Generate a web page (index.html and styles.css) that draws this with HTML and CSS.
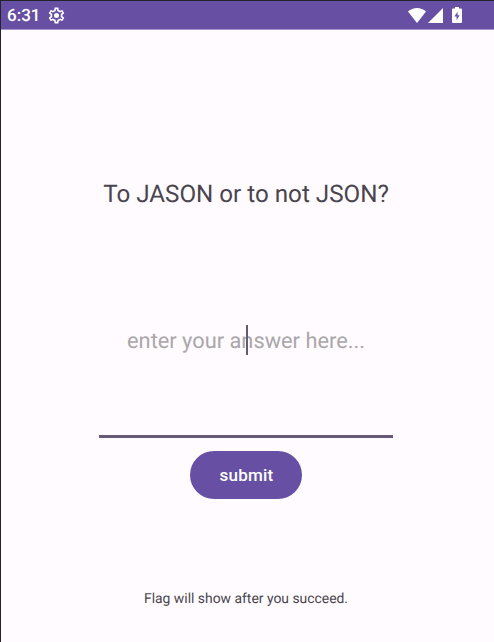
FILE: index.html
```html
<!DOCTYPE html>
<html lang="en">
<head>
<meta charset="utf-8">
<title>Question</title>
<link rel="stylesheet" href="styles.css">
</head>
<body>
<div class="device">
  <header class="status-bar">
    <span class="clock">6:31</span>
    <svg class="gear" viewBox="0 0 24 24"><path d="M19.43 12.98c.04-.32.07-.64.07-.98s-.03-.66-.07-.98l2.11-1.65c.19-.15.24-.42.12-.64l-2-3.46c-.12-.22-.39-.3-.61-.22l-2.49 1c-.52-.4-1.08-.73-1.69-.98l-.38-2.65C14.46 2.18 14.25 2 14 2h-4c-.25 0-.46.18-.49.42l-.38 2.65c-.61.25-1.17.59-1.69.98l-2.49-1c-.23-.09-.49 0-.61.22l-2 3.46c-.13.22-.07.49.12.64l2.11 1.65c-.04.32-.07.65-.07.98s.03.66.07.98l-2.11 1.65c-.19.15-.24.42-.12.64l2 3.46c.12.22.39.3.61.22l2.49-1c.52.4 1.08.73 1.69.98l.38 2.65c.03.24.24.42.49.42h4c.25 0 .46-.18.49-.42l.38-2.65c.61-.25 1.17-.59 1.69-.98l2.49 1c.23.09.49 0 .61-.22l2-3.46c.12-.22.07-.49-.12-.64l-2.11-1.65zm-2-1.7c.05.3.07.5.07.72s-.02.43-.07.73l-.14 1.13.9.7 1.1.84-.7 1.2-1.27-.5-1.04-.42-.9.68c-.43.32-.84.56-1.25.73l-1.06.43-.16 1.13-.2 1.35h-1.42l-.19-1.35-.16-1.13-1.06-.43c-.43-.18-.83-.41-1.23-.71l-.91-.7-1.06.43-1.27.51-.7-1.2 1.08-.84.89-.7-.14-1.13c-.03-.32-.06-.54-.06-.75s.02-.43.05-.72l.14-1.13-.89-.7-1.08-.84.7-1.2 1.27.5 1.04.42.9-.68c.43-.32.84-.56 1.25-.73l1.06-.43.16-1.13.2-1.35h1.41l.19 1.35.16 1.13 1.06.43c.43.18.83.41 1.23.71l.91.7 1.06-.43 1.27-.51.7 1.2-1.07.85-.89.7z"/><circle cx="12" cy="12" r="3.2"/></svg>
    <div class="indicators">
      <svg class="wifi" viewBox="0 0 18 15"><path d="M0 3.6C5-1.2 13-1.2 18 3.6L9 15z"/></svg>
      <svg class="signal" viewBox="0 0 15 15"><path d="M15 0v15H0z"/></svg>
      <svg class="battery" viewBox="0 0 10 16"><path fill-rule="evenodd" d="M3 0h4v1.600h2q1 0 1 1V15q0 1-1 1H1q-1 0-1-1V2.600q0-1 1-1h2zM5.500 4.800L2.400 9.600h2.200v3.600l3-5H5.500z"/></svg>
    </div>
  </header>
  <main class="content">
    <h1 class="question">To JASON or to not JSON?</h1>
    <div class="answer"><span class="hint">enter your answer here...</span><i class="caret"></i></div>
    <button class="submit">submit</button>
    <p class="note">Flag will show after you succeed.</p>
  </main>
</div>
</body>
</html>
```

FILE: styles.css
```css
* { box-sizing: border-box; }
body {
  margin: 0;
  background: #fffbfe;
  font-family: Roboto, sans-serif;
  text-rendering: geometricPrecision;
}
.device {
  height: 642px;
  border-top: 1px solid #242329;
  border-left: 1px solid #242329;
  overflow: hidden;
}
.status-bar {
  display: flex;
  align-items: center;
  height: 29px;
  padding: 0 32px 0 6px;
  background: #6750a4;
  border-bottom: 1px solid #a493c8;
  color: #fff;
}
.status-bar svg { fill: #fff; }
.clock {
  width: 40px;
  font-size: 17px;
  font-weight: 500;
  line-height: 29px;
  padding-top: 3px;
}
.gear { width: 19px; height: 19px; }
.indicators {
  display: flex;
  align-items: center;
  margin-left: auto;
}
.wifi { width: 18px; height: 15px; }
.signal { width: 15px; height: 15px; margin-left: 2px; }
.battery { width: 10px; height: 16px; margin-left: 9px; }
.content {
  display: flex;
  flex-direction: column;
  align-items: center;
  padding-right: 3px;
}
.question {
  margin: 149px 0 0;
  font-size: 24.2px;
  font-weight: 400;
  line-height: 30px;
  color: #49454f;
  white-space: nowrap;
}
.answer {
  position: relative;
  display: flex;
  justify-content: center;
  width: 294px;
  height: 113px;
  margin-top: 116px;
  border-bottom: 3px solid #665a78;
  font-size: 21.8px;
  line-height: 34px;
  color: #aaa7ab;
  white-space: nowrap;
}
.caret {
  position: absolute;
  left: 147px;
  top: 0;
  width: 2px;
  height: 30px;
  background: #625b71;
}
.submit {
  width: 112px;
  height: 48px;
  margin-top: 13px;
  padding: 0 0 1px 1px;
  border: 0;
  border-radius: 24px;
  background: #6750a4;
  color: #fff;
  font: 500 17px/20px Roboto, sans-serif;
  letter-spacing: 0.2px;
}
.note {
  margin: 90px 0 0;
  font-size: 13.9px;
  line-height: 20px;
  color: #49454f;
  white-space: nowrap;
}
```
